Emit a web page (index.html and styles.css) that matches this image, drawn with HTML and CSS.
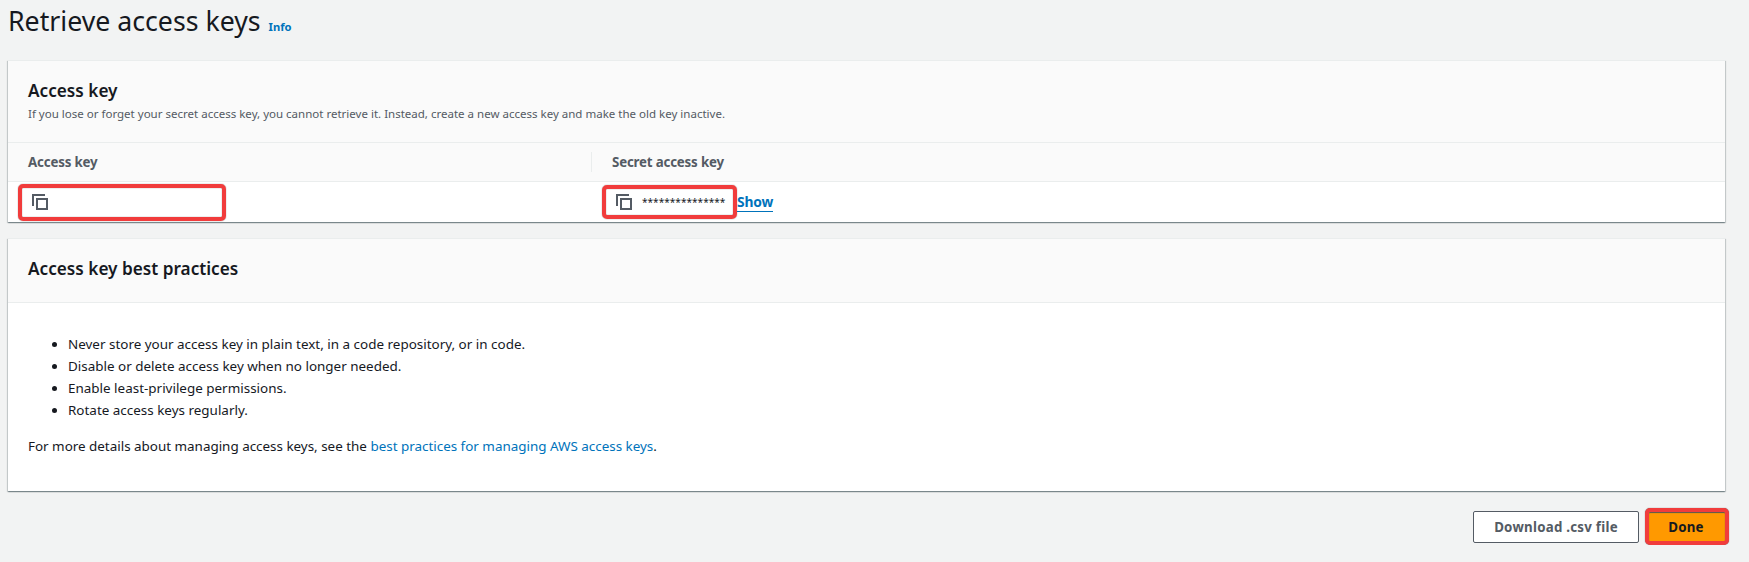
FILE: index.html
```html
<!DOCTYPE html>
<html lang="en">
<head>
<meta charset="utf-8">
<title>Retrieve access keys</title>
<link rel="stylesheet" href="styles.css">
</head>
<body>
<main class="page">
  <header class="page-header">
    <h1 class="page-title">Retrieve access keys</h1>
    <a class="info-link">Info</a>
  </header>

  <section class="panel">
    <div class="panel-header panel-header-tall">
      <h2 class="panel-title">Access key</h2>
      <p class="panel-description">If you lose or forget your secret access key, you cannot retrieve it. Instead, create a new access key and make the old key inactive.</p>
    </div>
    <div class="key-grid key-head">
      <div class="head-cell">Access key</div>
      <div class="head-cell head-divided">Secret access key</div>
    </div>
    <div class="key-grid key-row">
      <div class="highlight highlight-key">
        <svg class="copy-icon" viewBox="0 0 16 16"><path d="M1 12V1h12M5 5h10v10H5z"/></svg>
      </div>
      <div class="secret-cell">
        <div class="highlight highlight-secret">
          <svg class="copy-icon" viewBox="0 0 16 16"><path d="M1 12V1h12M5 5h10v10H5z"/></svg>
          <span class="mask">***************</span>
        </div>
        <a class="show-link">Show</a>
      </div>
    </div>
  </section>

  <section class="panel">
    <div class="panel-header panel-header-short">
      <h2 class="panel-title">Access key best practices</h2>
    </div>
    <div class="panel-body">
      <ul class="practice-list">
        <li>Never store your access key in plain text, in a code repository, or in code.</li>
        <li>Disable or delete access key when no longer needed.</li>
        <li>Enable least-privilege permissions.</li>
        <li>Rotate access keys regularly.</li>
      </ul>
      <p class="details">For more details about managing access keys, see the <a class="details-link">best practices for managing AWS access keys</a>.</p>
    </div>
  </section>

  <footer class="actions">
    <button class="button button-download">Download .csv file</button>
    <button class="button button-done">Done</button>
  </footer>
</main>
</body>
</html>
```
FILE: styles.css
```css
* { box-sizing: border-box; }
body {
  margin: 0;
  background: #f2f3f3;
  color: #16191f;
  font: 13.44px/22px "Noto Sans", "Open Sans", sans-serif;
}
h1, h2, p, ul { margin: 0; padding: 0; }
.page { width: 1733px; padding: 0 8px; }
.page-header {
  display: flex;
  align-items: baseline;
  gap: 8px;
  height: 60px;
  padding-top: 3px;
}
.page-title { font-size: 26.7px; line-height: 36px; font-weight: 400; white-space: nowrap; }
.info-link { color: #0073bb; font-size: 11.2px; font-weight: 700; line-height: 16px; }
.panel {
  background: #fff;
  margin-bottom: 16px;
  border-top: 1px solid #eaeded;
  box-shadow: 0 1px 1px rgba(0, 28, 36, .3), 1px 1px 1px rgba(0, 28, 36, .15), -1px 1px 1px rgba(0, 28, 36, .15);
}
.panel-header { background: #fafafa; border-bottom: 1px solid #eaeded; padding: 19px 20px 0; }
.panel-header-tall { height: 82px; }
.panel-header-short { height: 64px; }
.panel-title { font-size: 17.2px; line-height: 22px; font-weight: 600; }
.panel-description { color: #545b64; font-size: 11.52px; line-height: 18px; margin-top: 3px; }
.key-grid { display: grid; grid-template-columns: 583px 1fr; }
.key-head { height: 39px; background: #fafafa; border-bottom: 1px solid #eaeded; align-items: center; }
.head-cell { padding-left: 20px; color: #545b64; font-size: 13.3px; font-weight: 700; letter-spacing: -.18px; line-height: 20px; }
.head-divided { border-left: 1px solid #eaeded; }
.key-row { height: 40px; }
.highlight {
  display: flex;
  align-items: center;
  border: 4px solid #f13c3c;
  border-radius: 5px;
  box-shadow: 0 0 1px #555, inset 0 0 1px #555;
}
.highlight-key { width: 208px; height: 37px; margin: 2px 0 0 10px; padding: 0 0 1px 10px; }
.highlight-secret { width: 135px; height: 34px; padding: 0 0 1px 10px; }
.secret-cell { display: flex; padding: 3px 0 0 11px; }
.copy-icon { width: 16px; height: 16px; flex: none; fill: none; stroke: #545b64; stroke-width: 2; }
.mask { margin-left: 10px; color: #16191f; font-size: 10.1px; }
.show-link { height: 27px; padding-top: 7px; color: #0073bb; font-size: 13.8px; line-height: 20px; font-weight: 700; letter-spacing: -.1px; border-bottom: 1px solid #0073bb; }
.panel-body { height: 188px; padding: 30px 20px; }
.practice-list { padding-left: 40px; }
.details { margin-top: 14px; letter-spacing: -.015px; }
.details-link { color: #0073bb; }
.actions { display: flex; align-items: center; justify-content: flex-end; gap: 6px; margin: 17px -4px 0 0; }
.button { font: 700 13.3px/20px "Noto Sans", "Open Sans", sans-serif; letter-spacing: .25px; padding: 0; white-space: nowrap; }
.button-download { width: 166px; height: 32px; border: 1px solid #545b64; border-radius: 2px; background: #fff; color: #545b64; }
.button-done { width: 84px; height: 37px; border: 4px solid #f13c3c; border-radius: 5px; background: #ff9900; color: #16191f; padding-right: 2px; box-shadow: 0 0 1px #555, inset 0 1px 1px #555; }
```
